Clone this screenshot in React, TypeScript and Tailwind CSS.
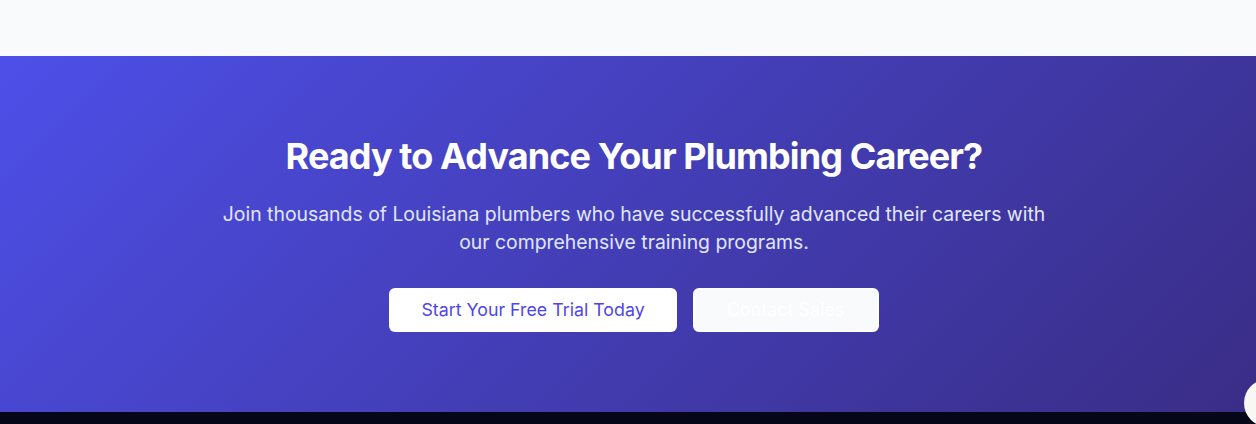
export default function App() {
  return (
    <div className="relative h-[424px] overflow-hidden bg-[#f9fafb] font-['Inter','Liberation_Sans',sans-serif]">
      <div className="h-14 bg-[#f9fafb]" />

      <section className="bg-linear-135 from-[#4d4fe8] to-[#392d86] py-20 pl-3">
        <div className="mx-auto max-w-4xl px-8 text-center">
          <h2 className="mb-6 text-4xl font-bold tracking-tight text-white">Ready to Advance Your Plumbing Career?</h2>
          <p className="mb-8 text-[19.4px] leading-7 text-[#e0e7ff]">
            Join thousands of Louisiana plumbers who have successfully advanced their careers with our comprehensive
            training programs.
          </p>
          <div className="flex justify-center gap-4">
            <button className="h-11 rounded-md bg-white px-8 text-[17.8px] text-[#4f46e5]">
              Start Your Free Trial Today
            </button>
            <button className="h-11 rounded-md border-2 border-white bg-[#f9fafb] px-8 text-lg text-white">
              Contact Sales
            </button>
          </div>
        </div>
      </section>

      <footer className="h-3 bg-[#050617]" />

      {/* floating chat bubble, mostly off screen */}
      <div className="absolute left-[1244px] top-[379px] h-12 w-12 rounded-full bg-[#f8f7f4]" />
    </div>
  );
}
